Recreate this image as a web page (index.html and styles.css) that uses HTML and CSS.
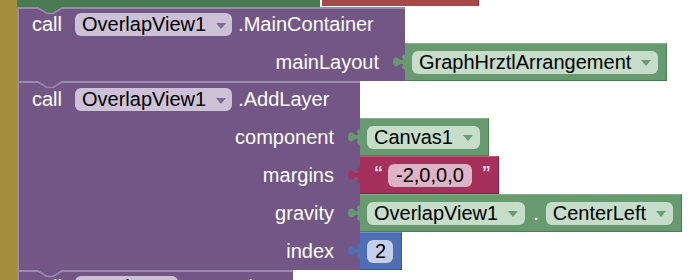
FILE: index.html
```html
<!DOCTYPE html>
<html>
<head>
<meta charset="utf-8">
<link rel="stylesheet" href="styles.css">
</head>
<body>
<div class="canvas">
  <div class="rail"></div>
  <div class="stack">
    <div class="top-strip">
      <div class="strip-green"></div>
      <div class="strip-red"></div>
    </div>

    <div class="block">
      <svg class="notch" width="24" height="8" viewBox="0 0 24 8"><path class="nf-green" d="M0,0 L24,0 L15,6 L9,6 Z"/><path class="ns" d="M0,1 L9,6.5 L15,6.5 L24,1"/></svg>
      <div class="head w1">
        <span class="lbl call">call</span>
        <span class="pill pp">OverlapView1<i class="arrow ap"></i></span>
        <span class="lbl meth">.MainContainer</span>
      </div>
      <div class="row">
        <div class="slot w1"><span class="lbl">mainLayout</span></div>
        <div class="val green">
          <svg class="tab" width="13" height="20" viewBox="0 0 13 20"><path d="M13,0 L13,2 C11,2 9,3 9,4.5 C9,5.5 10,6 10,7 C10,8 8,9 6,7 C3,4 0,6 0,10 C0,14 3,16 6,13 C8,11 10,12 10,13 C10,14 9,14.5 9,15.5 C9,17 11,18 13,18 L13,20 Z"/></svg>
          <span class="pill pg">GraphHrztlArrangement<i class="arrow ag"></i></span>
        </div>
      </div>
    </div>

    <div class="block">
      <svg class="notch" width="24" height="8" viewBox="0 0 24 8"><path class="nf-purple" d="M0,0 L24,0 L15,6 L9,6 Z"/><path class="ns" d="M0,1 L9,6.5 L15,6.5 L24,1"/></svg>
      <div class="head w2 tall">
        <span class="lbl call">call</span>
        <span class="pill pp">OverlapView1<i class="arrow ap"></i></span>
        <span class="lbl meth">.AddLayer</span>
      </div>
      <div class="row">
        <div class="slot w2"><span class="lbl">component</span></div>
        <div class="val green">
          <svg class="tab" width="13" height="20" viewBox="0 0 13 20"><path d="M13,0 L13,2 C11,2 9,3 9,4.5 C9,5.5 10,6 10,7 C10,8 8,9 6,7 C3,4 0,6 0,10 C0,14 3,16 6,13 C8,11 10,12 10,13 C10,14 9,14.5 9,15.5 C9,17 11,18 13,18 L13,20 Z"/></svg>
          <span class="pill pg">Canvas1<i class="arrow ag"></i></span>
        </div>
      </div>
      <div class="row">
        <div class="slot w2"><span class="lbl">margins</span></div>
        <div class="val red">
          <svg class="tab" width="13" height="20" viewBox="0 0 13 20"><path d="M13,0 L13,2 C11,2 9,3 9,4.5 C9,5.5 10,6 10,7 C10,8 8,9 6,7 C3,4 0,6 0,10 C0,14 3,16 6,13 C8,11 10,12 10,13 C10,14 9,14.5 9,15.5 C9,17 11,18 13,18 L13,20 Z"/></svg>
          <span class="quote">“</span>
          <span class="pill pr">-2,0,0,0</span>
          <span class="quote">”</span>
        </div>
      </div>
      <div class="row">
        <div class="slot w2"><span class="lbl">gravity</span></div>
        <div class="val green">
          <svg class="tab" width="13" height="20" viewBox="0 0 13 20"><path d="M13,0 L13,2 C11,2 9,3 9,4.5 C9,5.5 10,6 10,7 C10,8 8,9 6,7 C3,4 0,6 0,10 C0,14 3,16 6,13 C8,11 10,12 10,13 C10,14 9,14.5 9,15.5 C9,17 11,18 13,18 L13,20 Z"/></svg>
          <span class="pill pg">OverlapView1<i class="arrow ag"></i></span>
          <span class="dot">.</span>
          <span class="pill pg">CenterLeft<i class="arrow ag"></i></span>
        </div>
      </div>
      <div class="row">
        <div class="slot w2"><span class="lbl">index</span></div>
        <div class="val blue">
          <svg class="tab" width="13" height="20" viewBox="0 0 13 20"><path d="M13,0 L13,2 C11,2 9,3 9,4.5 C9,5.5 10,6 10,7 C10,8 8,9 6,7 C3,4 0,6 0,10 C0,14 3,16 6,13 C8,11 10,12 10,13 C10,14 9,14.5 9,15.5 C9,17 11,18 13,18 L13,20 Z"/></svg>
          <span class="pill pb">2</span>
        </div>
      </div>
    </div>

    <div class="block">
      <svg class="notch" width="24" height="8" viewBox="0 0 24 8"><path class="nf-purple" d="M0,0 L24,0 L15,6 L9,6 Z"/><path class="ns" d="M0,1 L9,6.5 L15,6.5 L24,1"/></svg>
      <div class="head w3">
        <span class="lbl call">call</span>
        <span class="pill pp">Overlap<i class="arrow ap"></i></span>
        <span class="lbl meth">.SetOrder</span>
      </div>
    </div>
  </div>
</div>
</body>
</html>
```

FILE: styles.css
```css
html, body {
  margin: 0;
  padding: 0;
  width: 690px;
  height: 280px;
  overflow: hidden;
  background: #ffffff;
}

body {
  font-family: "Liberation Sans", Arial, sans-serif;
  font-size: 20px;
}

.canvas {
  display: flex;
  height: 280px;
  overflow: hidden;
}

.rail {
  width: 17px;
  flex: none;
  background: #a48f3f;
}

.stack {
  display: flex;
  flex-direction: column;
  align-items: flex-start;
}

.top-strip {
  display: flex;
  align-items: flex-start;
  gap: 2px;
  height: 7px;
}

.strip-green {
  width: 303px;
  height: 7px;
  background: #4a7a51;
}

.strip-red {
  width: 157px;
  height: 6px;
  background: #a94848;
  border-right: 1px solid #7d3333;
  box-sizing: border-box;
}

.block {
  position: relative;
  display: flex;
  flex-direction: column;
}

.notch {
  position: absolute;
  left: 21px;
  top: 0;
  z-index: 2;
}

.notch .nf-green { fill: #4a7a51; }
.notch .nf-purple { fill: #725685; }
.notch .ns {
  fill: none;
  stroke: #9c88ae;
  stroke-width: 1.6;
}

.head {
  display: flex;
  align-items: flex-start;
  box-sizing: border-box;
  height: 36px;
  padding: 4px 0 0 13px;
  background: #725685;
  border-top: 2px solid #9c88ae;
  border-left: 2px solid #9c88ae;
}

.head.tall {
  height: 37px;
  padding-top: 5px;
}

.w1 { width: 388px; }
.w2 { width: 343px; }
.w3 { width: 276px; }

.lbl {
  color: #ffffff;
  line-height: 23px;
  white-space: nowrap;
}

.call { margin-right: 13px; }
.meth { margin-left: 6px; }

.row {
  display: flex;
}

.slot {
  box-sizing: border-box;
  height: 38px;
  display: flex;
  align-items: center;
  justify-content: flex-end;
  padding-right: 26px;
  background: #725685;
  border-left: 2px solid #9c88ae;
}

.pill {
  display: inline-flex;
  align-items: center;
  height: 23px;
  line-height: 23px;
  border-radius: 6px;
  padding: 0 6px 0 7px;
  color: #000000;
  white-space: nowrap;
}

.pp { background: #cdc1d8; }
.pg { background: #c5ddc9; padding-right: 7px; }
.pr { background: #e0b2c6; padding: 0 8px; }
.pb { background: #c5cfe9; padding: 0 7px 0 8px; }

.arrow {
  display: inline-block;
  width: 0;
  height: 0;
  margin-left: 10px;
  margin-top: 2px;
  border-left: 5.5px solid transparent;
  border-right: 5.5px solid transparent;
  border-top: 6px solid #7f6a92;
}

.arrow.ap { border-top-color: #7f6a92; }
.arrow.ag { border-top-color: #6c9c75; }

.val {
  position: relative;
  box-sizing: border-box;
  height: 38px;
  display: flex;
  align-items: center;
  padding: 0 8px 0 7px;
  border-top: 1px solid;
  border-bottom: 1px solid;
  border-right: 1px solid;
}

.val .tab {
  position: absolute;
  left: -12px;
  top: 8px;
}

.green {
  background: #679a6f;
  border-top-color: #84b18b;
  border-bottom-color: #4c7c54;
  border-right-color: #4c7c54;
}
.green .tab path { fill: #679a6f; }

.red {
  background: #a6305c;
  border-top-color: #bf5a7f;
  border-bottom-color: #7e2244;
  border-right-color: #7e2244;
  padding-left: 14px;
  padding-right: 7px;
}
.red .tab path { fill: #a6305c; }

.blue {
  background: #4e6fb3;
  border-top-color: #7590c8;
  border-bottom-color: #3a5590;
  border-right-color: #3a5590;
}
.blue .tab path { fill: #4e6fb3; }

.quote {
  color: #f4dde7;
  font-weight: bold;
  font-size: 18px;
  line-height: 23px;
  margin-top: -4px;
}

.quote:first-of-type { margin-right: 5px; }
.pr + .quote { margin-left: 10px; }

.dot {
  color: #ffffff;
  line-height: 23px;
  margin: 0 7px 0 8px;
}
```
